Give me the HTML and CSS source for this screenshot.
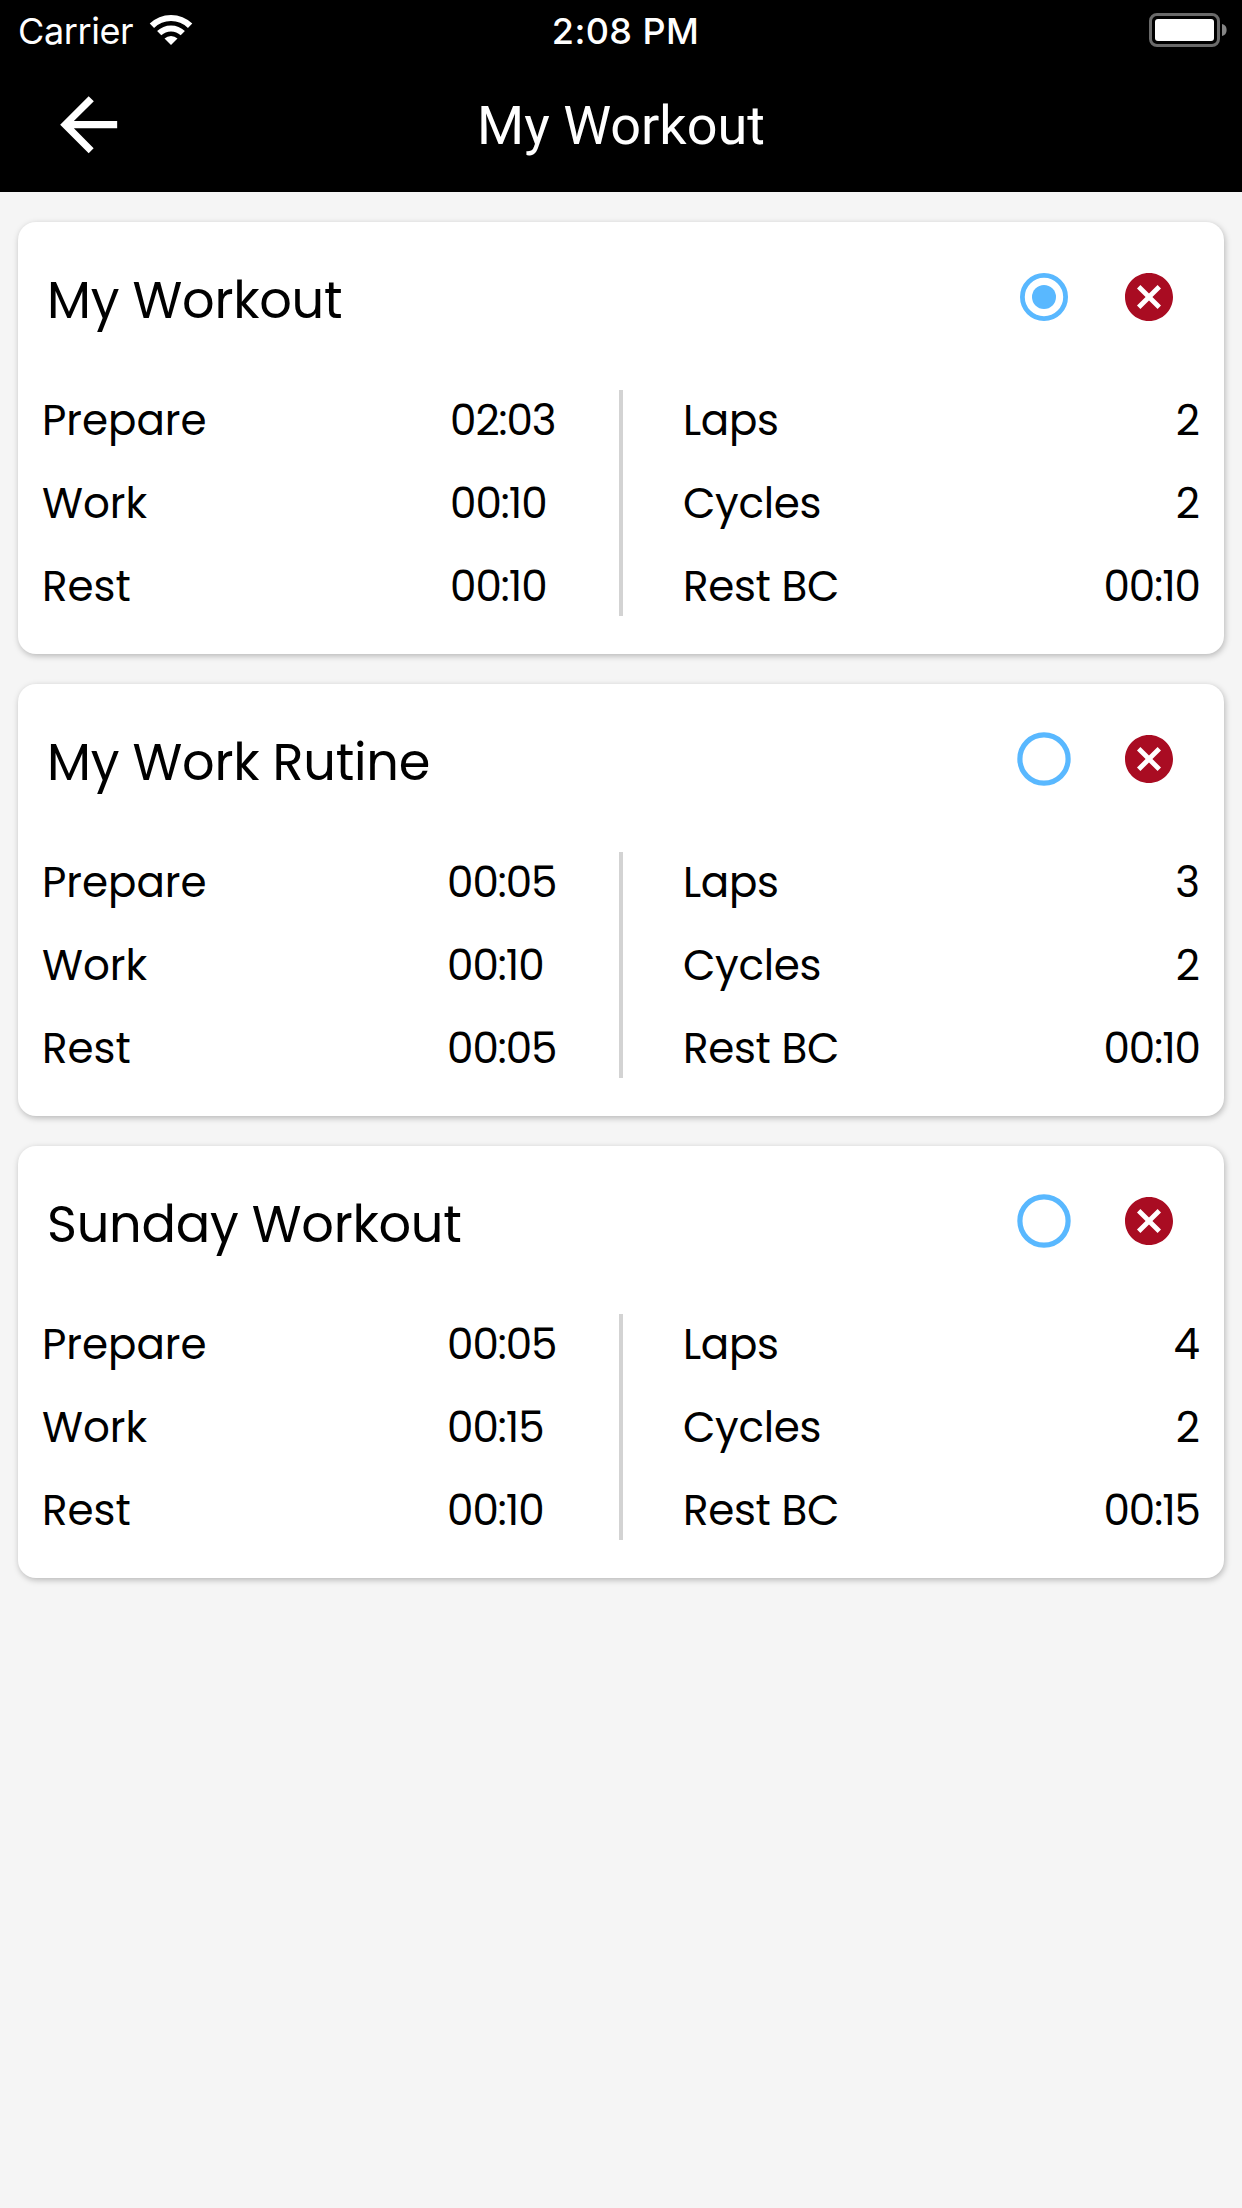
FILE: index.html
```html
<!DOCTYPE html>
<html lang="en">
<head>
<meta charset="utf-8">
<title>My Workout</title>
<link rel="stylesheet" href="styles.css">
</head>
<body>
<svg class="sprite" aria-hidden="true">
  <symbol id="radio-on" viewBox="0 0 48 48"><circle cx="24" cy="24" r="21.6" fill="none" stroke="#59b8ff" stroke-width="4.8"/><circle cx="24" cy="24" r="12" fill="#59b8ff"/></symbol>
  <symbol id="radio-off" viewBox="0 0 54 54"><circle cx="27" cy="27" r="24.1" fill="none" stroke="#59b8ff" stroke-width="5.2"/></symbol>
  <symbol id="remove" viewBox="48 48 416 416"><path fill="#a90c22" d="M256 48C140.6 48 48 140.6 48 256s92.6 208 208 208 208-92.6 208-208S371.4 48 256 48zm104 282.4L330.4 360 256 285.6 181.6 360 152 330.4l74.4-74.4-74.4-74.4 29.6-29.6 74.4 74.4 74.4-74.4 29.6 29.6-74.4 74.4 74.4 74.4z"/></symbol>
</svg>
<header class="topbar">
  <div class="status">
    <div class="network">
      <span class="carrier">Carrier</span>
      <svg class="wifi" width="44" height="32" viewBox="0 0 44 32">
        <g fill="none" stroke="#fff">
          <path d="M2.9 11.8 A27.3 27.3 0 0 1 41.1 11.8" stroke-width="6.2"/>
          <path d="M10.2 19.2 A17 17 0 0 1 33.8 19.2" stroke-width="6"/>
        </g>
        <path fill="#fff" d="M22 31 L15.5 24.5 A9.5 9.5 0 0 1 28.500 24.500 Z"/>
      </svg>
    </div>
    <span class="clock">2:08 PM</span>
    <svg class="battery" width="80" height="36" viewBox="0 0 80 36">
      <rect x="2.500" y="2.500" width="68" height="31" rx="6.500" fill="none" stroke="#6a6a6a" stroke-width="3"/>
      <rect x="7" y="7" width="59" height="22" rx="3" fill="#fff"/>
      <path d="M74 12 A6.2 6.2 0 0 1 74 24 Z" fill="#858585"/>
    </svg>
  </div>
  <nav class="nav">
    <svg class="back" width="85.33" height="85.33" viewBox="0 0 512 512"><path fill="#fff" d="M427 234.625H167.296l119.702-119.702L256 85 85 256l171 171 29.922-29.924L167.296 277.375H427v-42.75z"/></svg>
    <h1 class="nav-title">My Workout</h1>
  </nav>
</header>
<main class="list">
  <section class="card">
    <div class="card-head">
      <h2 class="name">My Workout</h2>
      <div class="actions"><svg class="radio"><use href="#radio-on"/></svg><svg class="remove"><use href="#remove"/></svg></div>
    </div>
    <div class="stats">
      <dl class="col">
        <div class="row"><dt>Prepare</dt><dd class="time">02:03</dd></div>
        <div class="row"><dt>Work</dt><dd class="time">00:10</dd></div>
        <div class="row"><dt>Rest</dt><dd class="time">00:10</dd></div>
      </dl>
      <div class="divider"></div>
      <dl class="col right">
        <div class="row"><dt>Laps</dt><dd>2</dd></div>
        <div class="row"><dt>Cycles</dt><dd>2</dd></div>
        <div class="row"><dt>Rest BC</dt><dd class="time">00:10</dd></div>
      </dl>
    </div>
  </section>
  <section class="card wide">
    <div class="card-head">
      <h2 class="name">My Work Rutine</h2>
      <div class="actions"><svg class="radio off"><use href="#radio-off"/></svg><svg class="remove"><use href="#remove"/></svg></div>
    </div>
    <div class="stats">
      <dl class="col">
        <div class="row"><dt>Prepare</dt><dd class="time">00:05</dd></div>
        <div class="row"><dt>Work</dt><dd class="time">00:10</dd></div>
        <div class="row"><dt>Rest</dt><dd class="time">00:05</dd></div>
      </dl>
      <div class="divider"></div>
      <dl class="col right">
        <div class="row"><dt>Laps</dt><dd>3</dd></div>
        <div class="row"><dt>Cycles</dt><dd>2</dd></div>
        <div class="row"><dt>Rest BC</dt><dd class="time">00:10</dd></div>
      </dl>
    </div>
  </section>
  <section class="card wide">
    <div class="card-head">
      <h2 class="name">Sunday Workout</h2>
      <div class="actions"><svg class="radio off"><use href="#radio-off"/></svg><svg class="remove"><use href="#remove"/></svg></div>
    </div>
    <div class="stats">
      <dl class="col">
        <div class="row"><dt>Prepare</dt><dd class="time">00:05</dd></div>
        <div class="row"><dt>Work</dt><dd class="time">00:15</dd></div>
        <div class="row"><dt>Rest</dt><dd class="time">00:10</dd></div>
      </dl>
      <div class="divider"></div>
      <dl class="col right">
        <div class="row"><dt>Laps</dt><dd>4</dd></div>
        <div class="row"><dt>Cycles</dt><dd>2</dd></div>
        <div class="row"><dt>Rest BC</dt><dd class="time">00:15</dd></div>
      </dl>
    </div>
  </section>
</main>
</body>
</html>
```
FILE: styles.css
```css
* { box-sizing: border-box; margin: 0; padding: 0; }

body {
  min-height: 2208px;
  background: #f5f5f5;
  color: #000;
  font-family: Poppins, Inter, sans-serif;
}

.sprite { display: none; }
svg { display: block; }

/* top bar */
.topbar { height: 192px; background: #000; color: #fff; font-family: Inter, sans-serif; }

.status {
  display: grid;
  grid-template-columns: 1fr auto 1fr;
  align-items: start;
  height: 60px;
  padding: 0 14px 0 18px;
  font-size: 36px;
  line-height: 62px;
}
.network { display: flex; gap: 14px; }
.carrier { width: 117px; letter-spacing: -0.4px; white-space: nowrap; }
.wifi { margin-top: 14px; }
.clock { margin-left: 5px; font-weight: 500; letter-spacing: 0.4px; }
.battery { justify-self: end; margin-top: 12px; }

.nav {
  display: grid;
  grid-template-columns: 86px 1fr 86px;
  align-items: center;
  height: 132px;
  padding: 0 46px;
}
.back { margin-bottom: 2px; }
.nav-title {
  font: 400 54px/132px Roboto, sans-serif;
  text-align: center;
}

/* workout cards */
.list {
  display: flex;
  flex-direction: column;
  gap: 30px;
  padding: 30px 18px;
}
.card {
  height: 432px;
  border-radius: 18px;
  background: #fff;
  box-shadow: 1px 2px 6px rgba(0, 0, 0, 0.26);
}
.card-head {
  display: flex;
  justify-content: space-between;
  align-items: center;
  height: 156px;
  padding: 0 51px 0 29px;
}
.name { font-size: 51px; font-weight: 400; line-height: 156px; letter-spacing: -0.25px; white-space: nowrap; }

.actions { display: flex; align-items: center; gap: 57px; margin-bottom: 6px; }
.radio, .remove { width: 48px; height: 48px; }
.radio.off { width: 54px; height: 54px; margin-right: -3px; }

.stats {
  display: grid;
  grid-template-columns: 601px 4px 1fr;
  height: 249px;
}
.divider { margin: 12px 0; background: #d3d3d3; }
.col { padding: 1px 0 0 24px; }
.col.right { padding: 1px 24px 0 60px; }
.row {
  display: grid;
  grid-template-columns: 408px 1fr;
  font-size: 42px;
  line-height: 83px;
  white-space: nowrap;
}
.wide .row { grid-template-columns: 405px 1fr; }
.col.right .row { display: flex; justify-content: space-between; }
.col.right dt { letter-spacing: -0.3px; }
.time { letter-spacing: -1px; }
```
